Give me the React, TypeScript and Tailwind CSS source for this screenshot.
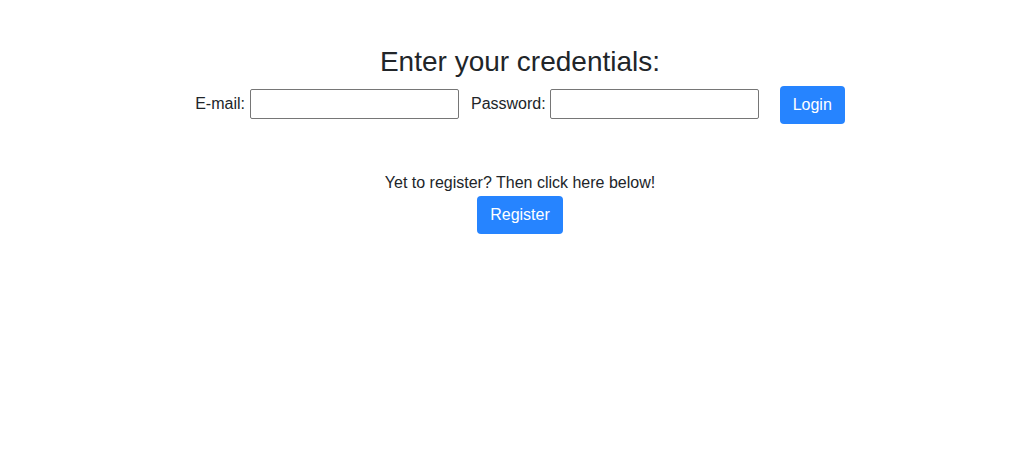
export default function App() {
  return (
    <div className="min-h-[458px] bg-white text-[#212529] font-['Liberation_Sans',Arial,sans-serif]">
      <div className="flex flex-col items-center pl-[10px] pt-[45px]">
        <h3 className="text-[28px] leading-[34px] font-normal">Enter your credentials:</h3>
        <form className="flex items-center mt-[7px]" onSubmit={e => e.preventDefault()}>
          <label className="text-base leading-6 mr-[5px] mb-[2px]">E-mail:</label>
          <input type="text" className="w-[209px] h-[30px] mb-[2px] border border-[#767676] rounded-[2px] px-1 outline-none" />
          <label className="text-base leading-6 ml-[12px] mr-[4px] mb-[2px]">Password:</label>
          <input type="password" className="w-[209px] h-[30px] mb-[2px] border border-[#767676] rounded-[2px] px-1 outline-none" />
          <button type="submit" className="ml-[21px] h-[38px] px-[13px] rounded bg-[#2684ff] text-white text-base leading-6">
            Login
          </button>
        </form>
        <p className="mt-[47px] text-base leading-6">Yet to register? Then click here below!</p>
        <button className="mt-[1px] h-[38px] px-[13px] rounded bg-[#2684ff] text-white text-base leading-6">
          Register
        </button>
      </div>
    </div>
  )
}
